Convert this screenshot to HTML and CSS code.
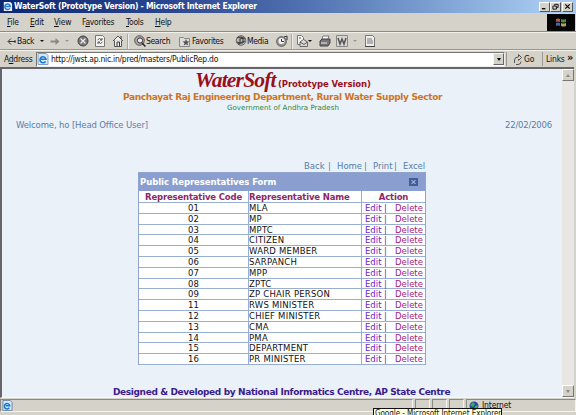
FILE: index.html
```
<!DOCTYPE html>
<html lang="en">
<head>
<meta charset="utf-8">
<title>WaterSoft (Prototype Version)</title>
<link rel="stylesheet" href="styles.css">
</head>
<body>
<div class="window">
  <header class="titlebar">
    <svg class="app-icon" viewBox="0 0 12 12"><path d="M2 1h7l2 2v8H2z" fill="#e9f2ff"/><path d="M8.500 8A3 3 0 1 1 9 6H4" fill="none" stroke="#2b78cc" stroke-width="1.500"/></svg>
    <span class="window-title">WaterSoft (Prototype Version) - Microsoft Internet Explorer</span>
    <div class="controls"><span class="btn"><svg viewBox="0 0 8 8"><path d="M1 6.500h4" stroke="#000" stroke-width="1.500"/></svg></span><span class="btn"><svg viewBox="0 0 8 8"><path d="M3 3V1.500h4V5H5.500M1 3.500h4V7H1z" fill="none" stroke="#000"/></svg></span><span class="btn close"><svg viewBox="0 0 8 8"><path d="M1.500 1.500l5 5m0-5l-5 5" stroke="#000" stroke-width="1.300"/></svg></span></div>
  </header>
  <nav class="menubar">
    <span class="m-file"><u>F</u>ile</span><span class="m-edit"><u>E</u>dit</span><span class="m-view"><u>V</u>iew</span><span class="m-fav">F<u>a</u>vorites</span><span class="m-tools"><u>T</u>ools</span><span class="m-help"><u>H</u>elp</span>
    <div class="flag"><svg viewBox="0 0 12 11"><path d="M1 2q2-1 4 0v3q-2-1-4 0z" fill="#b45b50"/><path d="M6 2q2 1 5 0v3q-3 1-5 0z" fill="#4e8a50"/><path d="M1 6q2-1 4 0v3q-2-1-4 0z" fill="#4964a8"/><path d="M6 6q2 1 5 0v3q-3 1-5 0z" fill="#b7a358"/></svg></div>
  </nav>
  <div class="toolbar">
    <svg class="t-back" viewBox="0 0 9 9"><path d="M9 4.500H2M4.500 1.500l-3 3 3 3M8.500 3v3" fill="none" stroke="#333"/></svg>
    <span class="t-back-label">Back</span><i class="caret"></i>
    <svg class="t-forward" viewBox="0 0 9 9"><path d="M0 3.500h5V1l4 3.500L5 8V5.500H0z" fill="#8b8984"/></svg><i class="caret dim"></i>
    <svg class="t-stop" viewBox="0 0 12 12"><circle cx="6" cy="6" r="5" fill="#777" stroke="#444"/><path d="M3.500 3.500l5 5m0-5l-5 5" stroke="#eee" stroke-width="1.200"/></svg>
    <svg class="t-refresh" viewBox="0 0 12 12"><path d="M1.500.500h7l2 2v9h-9z" fill="#f4f4f2" stroke="#777"/><path d="M3.500 5q2-3 4 0M6 5h2V3M8.500 7q-2 3-4 0M6 7H4v2" fill="none" stroke="#555"/></svg>
    <svg class="t-home" viewBox="0 0 12 12"><path d="M1 6l5-5 5 5M2.500 5.500v6h7v-6" fill="#eee" stroke="#555"/><path d="M5 11V7h2.500v4M9 1v3" fill="none" stroke="#333"/></svg>
    <i class="sep"></i>
    <svg class="t-search" viewBox="0 0 12 12"><circle cx="5.500" cy="5.500" r="4.800" fill="#aaa" stroke="#555"/><circle cx="6" cy="5.500" r="2.600" fill="#eee" stroke="#333"/><path d="M8 8l3.500 3.500" stroke="#222" stroke-width="1.500"/></svg>
    <span class="t-search-label">Search</span>
    <svg class="t-fav" viewBox="0 0 12 12"><path d="M.500 2.500h4l1 1h5v8H.500z" fill="#ddd" stroke="#888"/><path d="M7 4l1 2.200 2.500.200-2 1.600.800 2.500L7 9.200l-2.300 1.300.800-2.500-2-1.600 2.500-.200z" fill="#555"/></svg>
    <span class="t-fav-label">Favorites</span>
    <svg class="t-media" viewBox="0 0 12 12"><circle cx="6" cy="5.500" r="4.800" fill="#b9b9b5" stroke="#666"/><path d="M2 3q4-2 8 1M2 7q3 2 8-1M5 9V4l3-1v5M3 9h2M6 8h2" fill="none" stroke="#444" stroke-width="1.200"/></svg>
    <span class="t-media-label">Media</span>
    <svg class="t-history" viewBox="0 0 12 12"><circle cx="5.500" cy="6.500" r="4.800" fill="#999" stroke="#555"/><circle cx="5.500" cy="6" r="3" fill="#f4f4f4"/><path d="M5.500 4v2.500H8M8 2l3-1v4" fill="none" stroke="#333"/></svg>
    <i class="sep"></i>
    <svg class="t-mail" viewBox="0 0 12 12"><path d="M1.500.500h4l2 2v7h-6z" fill="#f5f5f5" stroke="#777"/><path d="M4 7l3.500-2.500L11.500 7v4.500H4z" fill="#ddd" stroke="#666"/><path d="M4 7l4 2.500L11.500 7M3 3h2" fill="none" stroke="#555"/></svg><i class="caret mailcaret"></i>
    <svg class="t-print" viewBox="0 0 12 12"><path d="M4 1h6L8.500 5h-6z" fill="#fff" stroke="#777"/><path d="M1 6l2-2h8v4l-2 3H1z" fill="#777" stroke="#444"/><path d="M2 8h6" stroke="#eee"/></svg>
    <svg class="t-word" viewBox="0 0 12 12"><path d="M.500.500h11v11H.500z" fill="#d9d8d4" stroke="#888"/><path d="M2 3l2 6 2-5 2 5 2-6" fill="none" stroke="#555" stroke-width="1.500"/></svg><i class="caret dim wordcaret"></i>
    <svg class="t-doc" viewBox="0 0 12 12"><path d="M1.500.500h7l2 2v9h-9z" fill="#eee" stroke="#777"/><path d="M3 4h5M3 6h6M3 8h6" stroke="#777"/><path d="M1 11.500h10" stroke="#444"/></svg>
  </div>
  <div class="addressbar">
    <span class="address-label">A<u>d</u>dress</span>
    <div class="address-box">
      <svg viewBox="0 0 12 12"><path d="M1 .500h8l2 2v9H1z" fill="#d5e8fa" stroke="#7f9fc0"/><path d="M8.500 8.500A3 3 0 1 1 9 6.300H4" fill="none" stroke="#1c78c8" stroke-width="1.600"/></svg>
      <span class="url">http://jwst.ap.nic.in/pred/masters/PublicRep.do</span>
      <span class="drop"><i></i></span>
    </div>
    <div class="go"><svg viewBox="0 0 10 12"><path d="M1.500 10V7q0-3 4-3V1.500l3 3-3 3V6M3 11.500h2q3 0 3-3" fill="none" stroke="#555"/></svg><span>Go</span></div>
    <div class="links"><span>Links</span><b>»</b></div>
  </div>
  <div class="viewport">
    <main class="page">
      <div class="brand"><span class="logo">WaterSoft</span><span class="proto">(Prototype Version)</span></div>
      <div class="dept"><span>Panchayat Raj Engineering Department, Rural Water Supply Sector</span></div>
      <div class="gov"><span>Government of Andhra Pradesh</span></div>
      <div class="userline"><span class="welcome">Welcome, ho [Head Office User]</span><span class="date">22/02/2006</span></div>
      <div class="actions"><a class="a-back">Back</a><i>|</i><a class="a-home">Home</a><i>|</i><a class="a-print">Print</a><i>|</i><a class="a-excel">Excel</a></div>
      <section class="form">
        <div class="form-title"><span>Public Representatives Form</span><svg viewBox="0 0 9 8"><path d="M0 0h9v8H0z" fill="#405d9c"/><path d="M2.500 2l4 4m0-4l-4 4" stroke="#cbd7f1"/></svg></div>
        <div class="row head"><b class="h-code"><span>Representative Code</span></b><b class="h-name"><span>Representative Name</span></b><b class="h-action"><span>Action</span></b></div>
        <div class="rows">
          <div class="row"><span>01</span><span>MLA</span><span><a>Edit</a><i>|</i><a>Delete</a></span></div>
          <div class="row"><span>02</span><span>MP</span><span><a>Edit</a><i>|</i><a>Delete</a></span></div>
          <div class="row"><span>03</span><span>MPTC</span><span><a>Edit</a><i>|</i><a>Delete</a></span></div>
          <div class="row"><span>04</span><span>CITIZEN</span><span><a>Edit</a><i>|</i><a>Delete</a></span></div>
          <div class="row"><span>05</span><span>WARD MEMBER</span><span><a>Edit</a><i>|</i><a>Delete</a></span></div>
          <div class="row"><span>06</span><span>SARPANCH</span><span><a>Edit</a><i>|</i><a>Delete</a></span></div>
          <div class="row"><span>07</span><span>MPP</span><span><a>Edit</a><i>|</i><a>Delete</a></span></div>
          <div class="row"><span>08</span><span>ZPTC</span><span><a>Edit</a><i>|</i><a>Delete</a></span></div>
          <div class="row"><span>09</span><span>ZP CHAIR PERSON</span><span><a>Edit</a><i>|</i><a>Delete</a></span></div>
          <div class="row"><span>11</span><span>RWS MINISTER</span><span><a>Edit</a><i>|</i><a>Delete</a></span></div>
          <div class="row"><span>12</span><span>CHIEF MINISTER</span><span><a>Edit</a><i>|</i><a>Delete</a></span></div>
          <div class="row"><span>13</span><span>CMA</span><span><a>Edit</a><i>|</i><a>Delete</a></span></div>
          <div class="row"><span>14</span><span>PMA</span><span><a>Edit</a><i>|</i><a>Delete</a></span></div>
          <div class="row"><span>15</span><span>DEPARTMENT</span><span><a>Edit</a><i>|</i><a>Delete</a></span></div>
          <div class="row"><span>16</span><span>PR MINISTER</span><span><a>Edit</a><i>|</i><a>Delete</a></span></div>
        </div>
      </section>
      <footer class="credit"><span>Designed &amp; Developed by National Informatics Centre, AP State Centre</span></footer>
    </main>
    <div class="scrollbar"><span class="sb"><i class="up"></i></span><span class="sb"><i class="down"></i></span></div>
  </div>
  <div class="statusbar">
    <div class="pane main-pane"><svg viewBox="0 0 12 12"><path d="M1 .500h8l2 2v9H1z" fill="#d5e8fa" stroke="#6c83a5"/><path d="M8 8.500A3 3 0 1 1 8.500 6.300H4" fill="none" stroke="#1c78c8" stroke-width="1.600"/></svg></div>
    <div class="pane small"></div><div class="pane small"></div><div class="pane small"></div>
    <div class="pane zone"><svg viewBox="0 0 10 10"><circle cx="5" cy="5" r="4.500" fill="#2147a8"/><path d="M1 4l3-3 2 2-2 3zM6 5l3-1-1 4-3 1z" fill="#3bab58"/></svg><span>Internet</span></div>
  </div>
  <div class="tooltip"><span>Google - Microsoft Internet Explorer</span></div>
</div>
</body>
</html>
```
FILE: styles.css
```
* { box-sizing: border-box; }
body { margin: 0; }
i { font-style: normal; }
svg { display: block; flex: none; }
u { text-decoration-thickness: 1px; text-underline-offset: 1px; }

.window {
  position: relative;
  width: 576px;
  height: 415px;
  overflow: hidden;
  display: flex;
  flex-direction: column;
  background: #d5d2ca;
  color: #111;
  font: 8.5px/11px "DejaVu Sans Condensed", "DejaVu Sans", sans-serif;
  white-space: nowrap;
}

.titlebar {
  height: 13px;
  flex: none;
  display: flex;
  align-items: center;
  padding: 0 3px 0 2px;
  background: linear-gradient(90deg, #0d2870, #2b4791 30%, #5d80bb 60%, #a6caf0 95%);
  color: #fff;
}
.app-icon { width: 11px; height: 11px; margin-right: 1px; }
.window-title { font-weight: bold; font-size: 8.5px; letter-spacing: -0.24px; }
.controls { display: flex; margin-left: auto; }
.btn {
  width: 11px; height: 10px;
  display: grid; place-items: center;
  background: #d5d2ca;
  border: 1px solid;
  border-color: #fff #555 #555 #fff;
}
.btn svg { width: 7px; height: 7px; }
.close { margin-left: 1px; }

.menubar {
  height: 19px; flex: none;
  display: flex; align-items: center;
  padding: 1px 0 0 7px;
  border-bottom: 1px solid #8e8b85;
  letter-spacing: -0.25px;
}
.m-file { width: 23px; }
.m-edit { width: 24px; }
.m-view { width: 28px; }
.m-fav { width: 44px; }
.m-tools { width: 29px; }
.flag {
  width: 28px; height: 17px;
  margin: 0 1px 0 auto;
  display: grid; place-items: center;
  background: #050505;
}
.flag svg { width: 12px; height: 11px; }

.toolbar {
  height: 18px; flex: none;
  display: flex; align-items: center;
  padding-left: 6px;
  border-top: 1px solid #f3f1ec;
  border-bottom: 1px solid #9a9791;
  letter-spacing: -0.35px;
}
.toolbar svg { width: 12px; height: 12px; }
.toolbar svg.t-back { width: 10px; height: 9px; }
.t-back-label { width: 23px; margin-left: 1px; }
.caret {
  width: 4px; flex: none;
  border: 2px solid transparent;
  border-top: 2.5px solid #111;
  border-bottom: 0;
}
.dim { border-top-color: #99968f; }
.toolbar svg.t-forward { width: 10px; height: 9px; margin: 0 5px 0 6px; }
.t-stop { margin-left: 8px; }
.t-refresh { margin-left: 5px; }
.t-home { margin-left: 6px; }
.sep { width: 2px; height: 15px; flex: none; margin-left: 3px; border-left: 1px solid #aaa7a0; border-right: 1px solid #eee; }
.t-search { margin-left: 5px; }
.t-search-label { width: 33px; }
.t-fav-label { width: 43px; margin-left: 1px; }
.t-media-label { width: 29px; }
.t-mail { margin-left: 3px; }
.t-print { margin-left: 7px; }
.t-word { margin-left: 5px; }
.wordcaret { margin-left: 5px; }
.t-doc { margin-left: 7px; }

.addressbar {
  height: 17px; flex: none;
  display: flex; align-items: center;
  padding-left: 4px;
  border-top: 1px solid #f3f1ec;
  letter-spacing: -0.2px;
}
.address-label { width: 32px; letter-spacing: -0.3px; }
.address-box {
  width: 469px; height: 15px; flex: none;
  display: flex; align-items: center;
  background: #fff;
  border: 1px solid #777;
  border-right-color: #eee;
  border-bottom-color: #eee;
}
.address-box svg { width: 12px; height: 12px; margin-right: 2px; }
.url { letter-spacing: -0.25px; }
.drop {
  width: 11px; height: 12px; margin-left: auto;
  display: grid; place-items: center;
  background: #d5d2ca;
  border: 1px solid; border-color: #f5f5f5 #666 #666 #f5f5f5;
}
.drop i { border: 2.5px solid transparent; border-top: 3px solid #000; border-bottom: 0; }
.go { width: 37px; height: 14px; margin-left: 1px; padding-left: 6px; display: flex; align-items: center; border-left: 1px solid #999; border-right: 1px solid #999; }
.go svg { width: 10px; height: 12px; margin-right: 1px; }
.links { display: flex; padding-left: 3px; }
.links span { width: 21px; }
.links b { font-size: 11px; line-height: 7px; }

.viewport {
  height: 331px; flex: none;
  display: flex;
  margin-right: 2px;
  border-top: 2px solid #66666a;
  border-left: 2px solid #66666a;
  border-bottom: 1px solid #f8f8f8;
}
.page {
  width: 560px; flex: none;
  background: #ebf1f9;
  font-family: "DejaVu Sans", sans-serif;
  display: flex; flex-direction: column;
}
.brand { height: 23px; padding-left: 193px; display: flex; align-items: baseline; line-height: 22px; color: #98101c; }
.logo { width: 83px; font: italic bold 21.5px/22px "Liberation Serif", serif; letter-spacing: -0.8px; }
.proto { font-size: 8.5px; font-weight: bold; letter-spacing: -0.08px; }
.dept { height: 11px; padding-left: 121px; color: #ce7426; font-size: 9px; font-weight: bold; line-height: 11px; letter-spacing: -0.35px; }
.gov { height: 10px; padding-left: 225px; color: #30883a; font-size: 7.1px; line-height: 10px; }
.userline { height: 12px; margin: 6px 9px 0 14px; display: flex; justify-content: space-between; color: #557fa9; line-height: 12px; letter-spacing: -0.14px; }
.date { letter-spacing: -0.2px; margin-right: 1px; }
.actions { height: 12px; margin-top: 29px; padding-left: 302px; display: flex; color: #557fa9; line-height: 12px; }
.actions i { width: 9px; }
.a-back { width: 24px; }
.a-home { width: 27px; }
.a-print { width: 21px; }
.a-excel { letter-spacing: -0.1px; }

.form { width: 288px; margin: 0 0 0 136px; border: 1px solid #8fa4cf; border-bottom: 0; background: #fff; }
.form-title { height: 18px; display: flex; align-items: center; justify-content: space-between; padding: 0 7px 0 1px; background: #8a9fcf; color: #fff; font-weight: bold; letter-spacing: -0.06px; }
.form-title svg { width: 9px; height: 8px; }
.row { display: grid; grid-template-columns: 109px 113px 1fr; border-bottom: 1px solid #98aed2; }
.head { height: 12px; color: #8d2864; line-height: 12px; letter-spacing: -0.17px; }
.row > * + * { border-left: 1px solid #98aed2; }
.row > :first-child, .h-action { text-align: center; }
.rows { height: 162px; display: grid; grid-template-rows: repeat(15, 10.8px); line-height: 10.8px; }
.rows .row > :nth-child(2) { letter-spacing: 0.22px; }
.rows .row > :last-child { display: flex; padding-left: 3px; }
.rows a:first-child { width: 19px; color: #6f25c4; }
.rows i { width: 11px; color: #6f25c4; }
.rows a:last-child { color: #a52280; }

.credit { margin: 21px 0 0 111px; line-height: 12px; color: #3a1b8b; font-weight: bold; font-size: 9px; letter-spacing: -0.37px; }

.scrollbar { width: 12px; display: flex; flex-direction: column; justify-content: space-between; background: #e9e7e3; }
.sb { height: 12px; display: grid; place-items: center; background: #d5d2ca; border: 1px solid; border-color: #fff #777 #777 #fff; }
.sb i { border: 2.5px solid transparent; }
.sb .up { border-bottom: 3px solid #8b8984; border-top: 0; }
.sb .down { border-top: 3px solid #8b8984; border-bottom: 0; }

.statusbar { height: 13px; flex: none; margin-top: 1px; display: flex; gap: 2px; }
.pane { border: 1px solid; border-color: #8b8984 #f4f4f4 #f4f4f4 #8b8984; }
.main-pane { width: 413px; padding-left: 1px; }
.main-pane svg { width: 11px; height: 11px; }
.small { width: 15px; }
.zone { flex: 1; padding-left: 2px; display: flex; align-items: center; letter-spacing: -0.15px; }
.zone svg { width: 10px; height: 10px; margin-right: 3px; }

.tooltip { position: absolute; left: 373px; top: 408px; width: 129px; height: 12px; padding-left: 1px; background: #fffee1; border: 1px solid #111; line-height: 9px; font-size: 8px; letter-spacing: -0.06px; }
```
